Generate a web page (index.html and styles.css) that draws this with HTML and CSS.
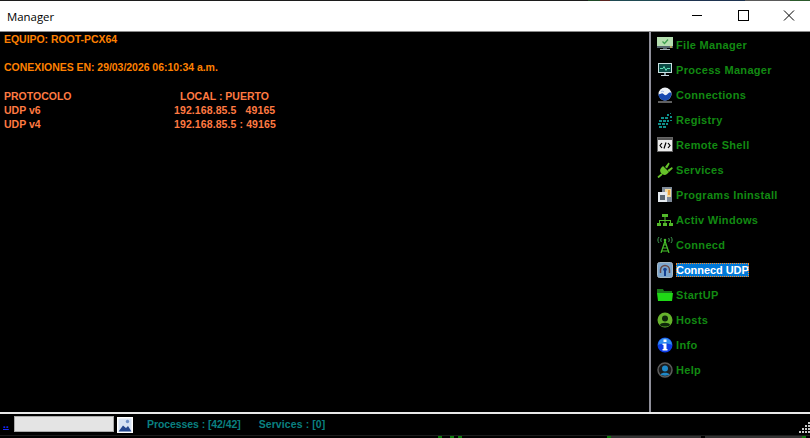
FILE: index.html
```html
<!DOCTYPE html>
<html lang="es">
<head>
<meta charset="utf-8">
<title>Manager</title>
<link rel="stylesheet" href="styles.css">
</head>
<body>
<div class="window">
  <div class="topedge"></div>
  <header class="titlebar">
    <span class="title">Manager</span>
    <div class="controls">
      <svg class="ctl" viewBox="0 0 46 30"><path d="M18 14.500h10" stroke="#000" fill="none"/></svg>
      <svg class="ctl" viewBox="0 0 46 30"><rect x="18.500" y="9.500" width="10" height="10" stroke="#000" fill="none"/></svg>
      <svg class="ctl" viewBox="0 0 46 30"><path d="M18 9.500l10 10M28 9.500l-10 10" stroke="#000" fill="none"/></svg>
    </div>
  </header>
  <div class="main">
    <section class="console">
      <p class="line">EQUIPO: ROOT-PCX64</p>
      <p class="line"></p>
      <p class="line">CONEXIONES EN: 29/03/2026 06:10:34 a.m.</p>
      <p class="line"></p>
      <div class="ports">
        <span>PROTOCOLO</span><span class="local">LOCAL : PUERTO</span>
        <span>UDP v6</span><span class="ip">192.168.85.5 &nbsp; 49165</span>
        <span>UDP v4</span><span class="ip">192.168.85.5 : 49165</span>
      </div>
    </section>
    <nav class="menu">
      <a class="item"><svg class="ico" viewBox="0 0 16 16"><rect x="0" y="0" width="16" height="9" fill="#b5dfb0"/><path d="M5.500 4.500l2 2 3.500-4" stroke="#3f9f50" stroke-width="1.300" fill="none"/><rect x="0" y="9" width="16" height="2" fill="#56666e"/><rect x="13" y="9.500" width="2" height="1" fill="#ffd040"/><rect x="6" y="11" width="4" height="1" fill="#56666e"/><rect x="3" y="12" width="10" height="1" fill="#a8b4b8"/></svg><span>File Manager</span></a>
      <a class="item"><svg class="ico" viewBox="0 0 16 16"><rect x="1.500" y="1.500" width="13" height="9" fill="#0a4a44" stroke="#c8dfe0"/><path d="M3 6.500h3l1-2 2 4 1-2h3" stroke="#5fe0b8" fill="none"/><rect x="7" y="11" width="2" height="2" fill="#7f9aa0"/><rect x="4" y="13" width="8" height="1" fill="#c8d8e0"/></svg><span>Process Manager</span></a>
      <a class="item"><svg class="ico" viewBox="0 0 16 16"><circle cx="8" cy="7" r="6.500" fill="#eef2f8"/><path d="M1.500 7c2 1 3-2 5 0s3 1 4 0 2-2 4-1c0 5-3 7.500-6.500 7.500S1.500 11 1.500 7z" fill="#1748b0"/><path d="M4 5c1-1 2-1 3 0" stroke="#9db8e8" fill="none"/><path d="M1 15h14" stroke="#8a8a8a" stroke-width="1.400"/></svg><span>Connections</span></a>
      <a class="item"><svg class="ico" viewBox="0 0 16 16"><path d="M4 5h3v2H4zM8 5h3v2H8zM2 8h3v2H2zM6 8h3v2H6zM1 11h3v2H1zM5 11h3v2H5zM2 14h3v2H2zM6 14h3v2H6zM10 8h2v2h-2zM9 11h2v2H9zM10 2h2v2h-2zM13 1h1v1h-1zM13 4h2v2h-2zM13 8h2v1h-2z" fill="#0f8f8a"/></svg><span>Registry</span></a>
      <a class="item"><svg class="ico" viewBox="0 0 16 16"><rect x="0.500" y="0.500" width="15" height="14" fill="#ececec" stroke="#666"/><rect x="1" y="1" width="14" height="2" fill="#555"/><path d="M5 6L3 8.500 5 11M11 6l2 2.500L11 11M9 5.500L7 11.500" stroke="#000" stroke-width="1.200" fill="none"/></svg><span>Remote Shell</span></a>
      <a class="item"><svg class="ico" viewBox="0 0 16 16"><path d="M6 4l6 6-2 2c-2 1.500-4 1-5.500-.5S2.500 8 4 6z" fill="#66c22a"/><path d="M5 12l-4 3.500" stroke="#66c22a" stroke-width="1.800"/><path d="M8 5l3.500-4.500 1.200 1.200L10 6.500zM10.500 8l4.500-3 .8 1.500L12 10z" fill="#66c22a"/></svg><span>Services</span></a>
      <a class="item"><svg class="ico" viewBox="0 0 16 16"><rect x="5" y="0" width="10" height="15" fill="#7f8b99"/><rect x="8" y="2" width="6" height="8" fill="#f2d9a0"/><rect x="11" y="3" width="2" height="5" fill="#e8a040"/><rect x="1" y="5" width="9" height="10" fill="#e4e9ee"/><rect x="3" y="8" width="5" height="5" fill="#59656f"/></svg><span>Programs Ininstall</span></a>
      <a class="item"><svg class="ico" viewBox="0 0 16 16"><path d="M5 2h6v3H5zM0 11h4v3H0zM6 11h4v3H6zM12 11h4v3h-4zM7.500 5h1v3h-1zM2 8h12v1H2zM2 9h1v2H2zM13 9h1v2h-1zM7.500 9h1v2h-1z" fill="#52b82a"/></svg><span>Activ Windows</span></a>
      <a class="item"><svg class="ico" viewBox="0 0 16 16"><path d="M8 4L4 16M8 4l4 12M6.500 8h3M5.500 11h5M4.500 14h7" stroke="#46c02a" stroke-width="1.200" fill="none"/><circle cx="8" cy="3" r="1.300" fill="#46c02a"/><path d="M4.500 1C3.500 2 3.500 4 4.500 5M11.500 1c1 1 1 3 0 4M2 0C.5 2 .5 4 2 6M14 0c1.500 2 1.500 4 0 6" stroke="#3f9a50" fill="none"/></svg><span>Connecd</span></a>
      <a class="item selected"><svg class="ico" viewBox="0 0 16 16"><rect x="0.500" y="0.500" width="15" height="15" rx="2" fill="#7ea6cc" stroke="#a8b8c4"/><path d="M3.500 11V8a4.500 4.500 0 0 1 9 0v3" stroke="#6a4a48" stroke-width="1.500" fill="none"/><circle cx="8" cy="7.500" r="1.800" fill="#143f90"/><rect x="7" y="8" width="2" height="6" fill="#143f90"/></svg><span class="label">Connecd UDP</span></a>
      <a class="item"><svg class="ico" viewBox="0 0 16 16"><path d="M0 2h6l1 2h8v2H0z" fill="#1a7a1a"/><path d="M0 6h16l-1 8H1z" fill="#1fd816"/></svg><span>StartUP</span></a>
      <a class="item"><svg class="ico" viewBox="0 0 16 16"><circle cx="8" cy="8" r="7.500" fill="#66b22c"/><circle cx="8" cy="6.500" r="3" fill="#0c2409"/><path d="M2.800 13c1-3 9.400-3 10.400 0-2 2-8.400 2-10.400 0z" fill="#0c2409"/></svg><span>Hosts</span></a>
      <a class="item"><svg class="ico" viewBox="0 0 16 16"><circle cx="8" cy="8" r="7.500" fill="#0d3de6"/><path d="M1 8a7 7 0 0 1 14 0c-3-2-10-2-14 0z" fill="#2f8cf0"/><rect x="6.500" y="2.500" width="3" height="2.500" fill="#fff"/><path d="M5.500 6.500h4V12h1v1.500h-5V12h1V8h-1z" fill="#fff"/></svg><span>Info</span></a>
      <a class="item"><svg class="ico" viewBox="0 0 16 16"><circle cx="8" cy="8" r="7" fill="#1a1a1a" stroke="#5c5c5c" stroke-width="1.500"/><circle cx="8" cy="6.500" r="3" fill="#1e88c8"/><path d="M3.500 12.500c1-2.500 8-2.500 9 0-2 1.500-7 1.500-9 0z" fill="#1e88c8"/></svg><span>Help</span></a>
    </nav>
  </div>
  <footer class="status">
    <a class="dots">..</a>
    <span class="field"></span>
    <svg class="pic" viewBox="0 0 16 16"><rect x="0" y="0" width="16" height="16" fill="#fff"/><rect x="1.500" y="1.500" width="13" height="13" fill="#d6e2f4"/><path d="M1.500 14.500l4.500-6 3 2.500 2-2 3.500 5.500z" fill="#23468f"/><circle cx="10.500" cy="4.500" r="1.700" fill="#6f90c8"/></svg>
    <span class="stat first">Processes : [42/42]</span>
    <span class="stat second">Services : [0]</span>
    <svg class="grip" viewBox="0 0 11 11"><path d="M9 0h2v2H9zM6 3h2v2H6zM9 3h2v2H9zM3 6h2v2H3zM6 6h2v2H6zM9 6h2v2H9zM0 9h2v2H0zM3 9h2v2H3zM6 9h2v2H6zM9 9h2v2H9z" fill="#c8c8c8"/></svg>
  </footer>
  <div class="edge">
    <i class="seg a"></i><i class="seg g4"></i><i class="seg b"></i><i class="seg g4"></i><i class="seg c"></i><i class="seg g4"></i><i class="seg d"></i><i class="seg g4"></i><i class="seg e"></i><i class="seg dark"></i><i class="seg f"></i><i class="seg g4"></i>
  </div>
</div>
</body>
</html>
```
FILE: styles.css
```css
* { box-sizing: border-box; }
html, body { margin: 0; height: 100%; background: #000; overflow: hidden; }
.window {
  width: 810px;
  height: 438px;
  display: flex;
  flex-direction: column;
  background: #000;
  font: bold 10.5px/14px "Liberation Sans", Arial, sans-serif;
}
.topedge {
  height: 1px;
  flex: none;
  background: linear-gradient(90deg, #1c1c1c 0 588px, #1f4a26 588px 600px, #5a2420 600px 610px, #1f4a52 610px 660px, #1e3350 660px 745px, #5a5a5a 745px 790px, #2c5a2c 790px);
}
.titlebar {
  height: 31px;
  flex: none;
  background: #fff;
  border-bottom: 1px solid #8a8a8a;
  display: flex;
  align-items: center;
  justify-content: space-between;
  padding-left: 7px;
}
.title { font: 400 11.4px "Open Sans", "Noto Sans", sans-serif; color: #000; }
.controls { display: flex; margin-right: -2px; }
.ctl { width: 46px; height: 30px; display: block; }
.main { height: 382px; flex: none; display: flex; border-bottom: 2px solid #e8e8e8; }
.console { flex: 1; padding: 0 4px; color: #ff8000; }
.line { margin: 0; height: 14px; letter-spacing: -.04px; }
.ports {
  display: grid;
  grid-template-columns: 170px auto;
  justify-content: start;
  margin-top: 1px;
  color: #ff7a42;
}
.local { padding-left: 6px; }
.ip { letter-spacing: .1px; }
.menu {
  width: 161px;
  flex: none;
  border-left: 2px solid #8f8f9a;
  padding-left: 6px;
  display: flex;
  flex-direction: column;
  font-size: 11px;
}
.item {
  height: 25px;
  flex: none;
  display: flex;
  align-items: center;
  gap: 3px;
  color: #128a12;
  letter-spacing: .32px;
}
.ico { width: 16px; height: 16px; flex: none; }
.selected .label {
  color: #fff;
  background: #0078d7;
  outline: 1px dotted #ff8a20;
  outline-offset: -1px;
  line-height: 14px;
  letter-spacing: -.05px;
}
.status {
  flex: 1;
  display: flex;
  align-items: center;
  position: relative;
  padding: 0 0 1px 3px;
  color: #0a8080;
}
.dots { color: #1a2cff; text-decoration: underline; width: 11px; }
.field { width: 100px; height: 16px; background: #e4e4e4; border: 1px solid #aaa; }
.pic { width: 16px; height: 16px; margin: 2px 0 0 3px; }
.stat.first { margin-left: 14px; letter-spacing: -.08px; }
.stat.second { margin-left: 18px; letter-spacing: .1px; }
.grip { position: absolute; right: 0; bottom: 2px; width: 11px; height: 11px; }
.edge {
  height: 3px;
  flex: none;
  display: flex;
  border-top: 1px solid #1c1c1c;
}
.seg { display: block; height: 2px; }
.a { width: 438px; }
.b { width: 8px; }
.c { width: 4px; }
.d { width: 145px; }
.e { width: 90px; background: #333; }
.f { width: 97px; background: #333; }
.dark { width: 4px; }
.g4 { width: 4px; background: #0c7a0c; }
```
